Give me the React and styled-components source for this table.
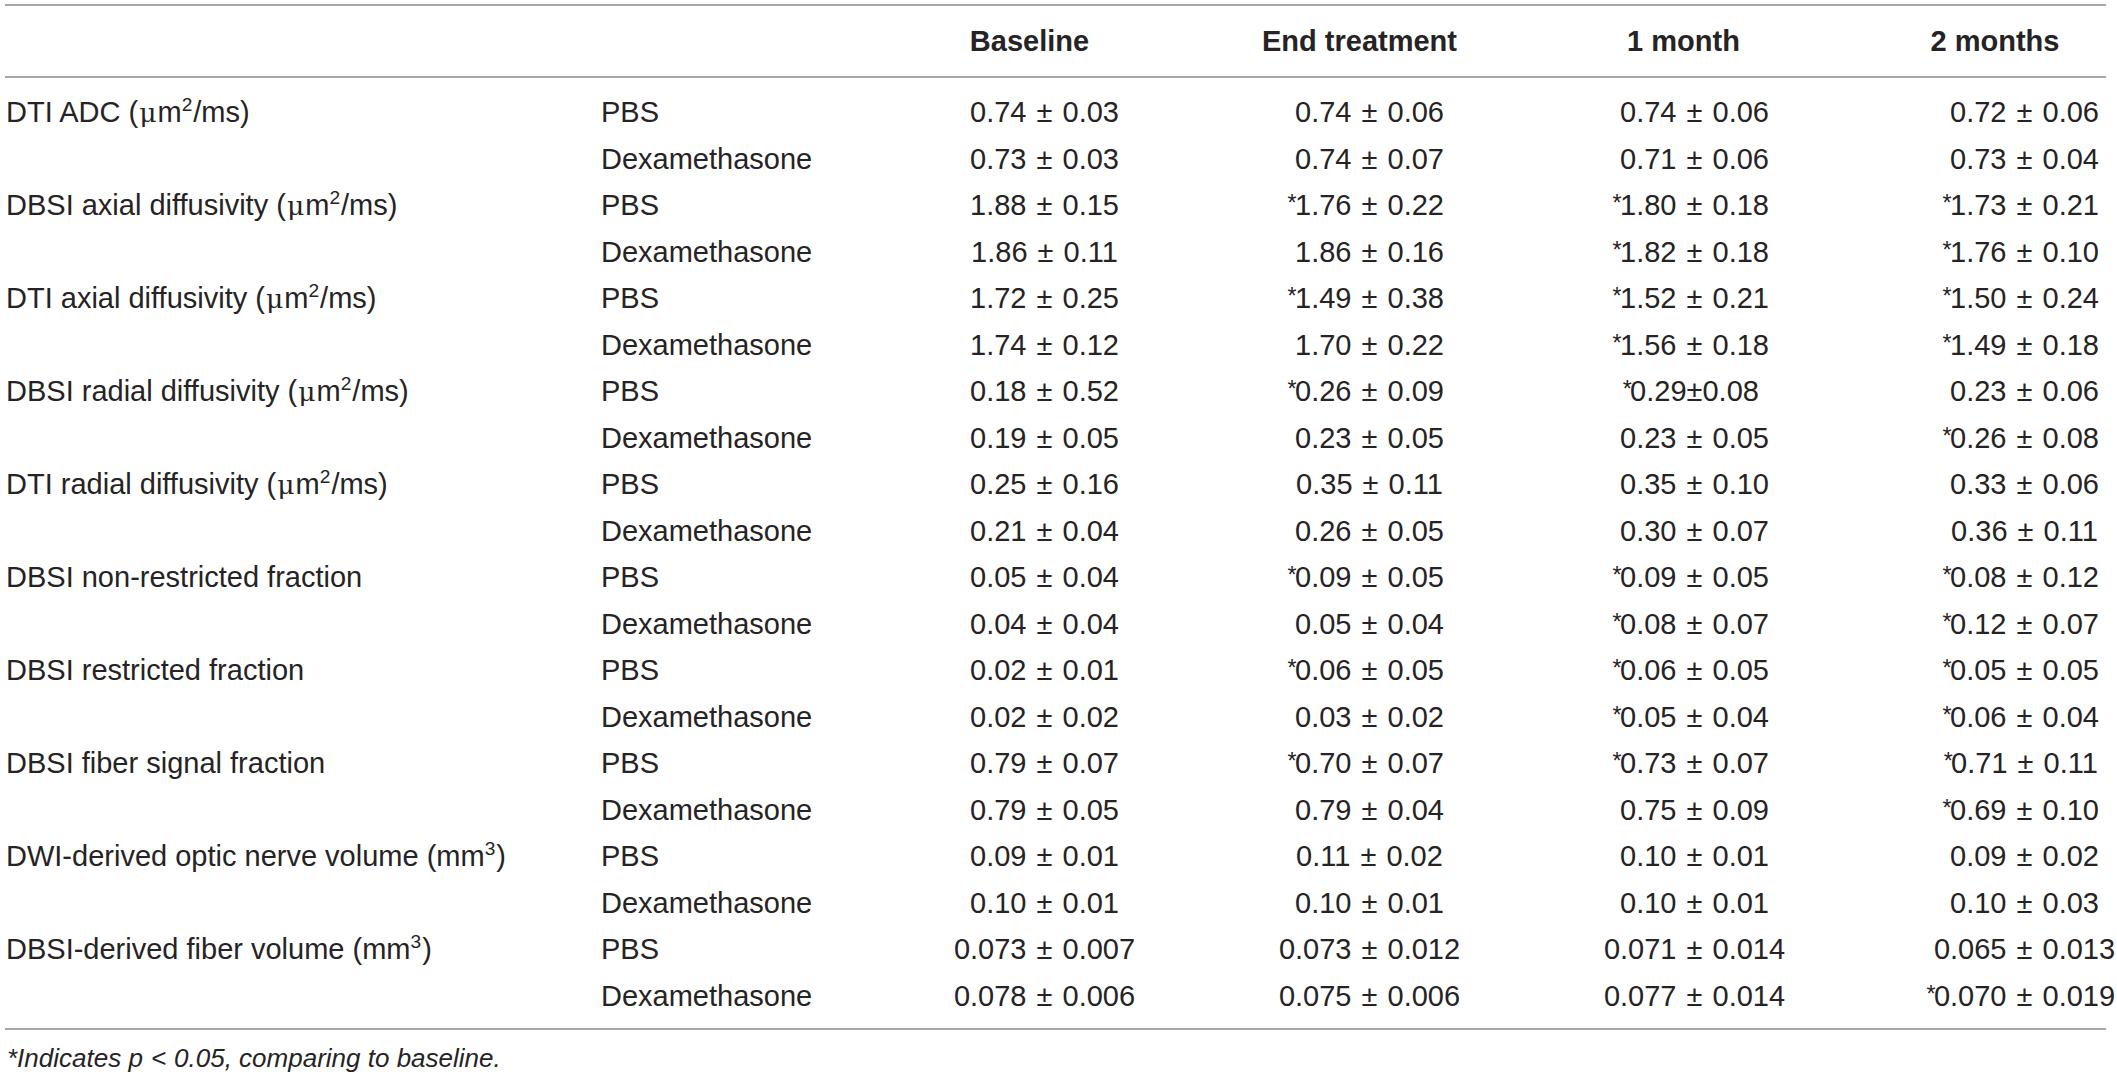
import styled, { createGlobalStyle } from "styled-components";

/* ---------------- GLOBAL ---------------- */

const GlobalStyle = createGlobalStyle`
  html, body {
    margin: 0;
    padding: 0;
    background: #ffffff;
  }
  body {
    font-family: "Liberation Sans", Arial, sans-serif;
    color: #262324;
    overflow: hidden;
  }
`;

/* ---------------- PAGE + TABLE FRAME ---------------- */

const Page = styled.div`
  padding: 4px 11px 0 5px;
`;

const Table = styled.div`
  width: 2101px;
  border-top: 2px solid #a7a7a7;
`;

const Row = styled.div`
  display: grid;
  grid-template-columns: 596px 281px 325px 325px 325px 260px;
  align-items: center;
  height: ${(p) => p.$height || "46.5px"};
  font-size: 29px;
  line-height: 1;
  white-space: nowrap;
`;

const HeadRow = styled(Row)`
  border-bottom: 2px solid #a7a7a7;
`;

const Body = styled.div`
  padding: 11.5px 0 8.5px;
  border-bottom: 2px solid #a7a7a7;
`;

/* ---------------- CELLS ---------------- */

const LabelCell = styled.div`
  padding-left: 1px;
`;

const GroupCell = styled.div``;

const HeadCell = styled.div`
  font-weight: 700;
  text-align: center;
  padding-right: ${(p) => p.$shift}px;
  &:last-child {
    padding-left: 64px;
  }
`;

const ValueCell = styled.div`
  text-align: center;
  &:last-child {
    padding-left: 64px;
    margin-right: -11px;
  }
`;

const Star = styled.span`
  display: inline-block;
  width: 0;
  margin-left: -0.32em;
  padding-right: 0.32em;
  font-size: 0.8em;
  vertical-align: 0.18em;
`;

const Pm = styled.span`
  margin: 0 ${(p) => (p.$tight ? 0 : 2)}px;
`;

const Sup = styled.sup`
  font-size: 0.66em;
  line-height: 0;
  vertical-align: 0.6em;
  margin-right: 1px;
`;

const Mu = styled.span`
  font-family: "DejaVu Serif", "Liberation Serif", serif;
  font-size: 0.92em;
  margin: 0 1px;
`;

const Footnote = styled.p`
  margin: 12px 0 0 2px;
  font-size: 26px;
  line-height: 32px;
  font-style: italic;
`;

const Lt = styled.span`
  margin: 0 8px;
`;

/* ---------------- DATA ---------------- */

const unit = (
  <>
    {" ("}
    <Mu>μ</Mu>m<Sup>2</Sup>/ms)
  </>
);

const mm3 = (
  <>
    {" (mm"}
    <Sup>3</Sup>)
  </>
);

const measures = [
  {
    label: <>DTI ADC{unit}</>,
    pbs: ["0.74 ± 0.03", "0.74 ± 0.06", "0.74 ± 0.06", "0.72 ± 0.06"],
    dex: ["0.73 ± 0.03", "0.74 ± 0.07", "0.71 ± 0.06", "0.73 ± 0.04"],
  },
  {
    label: <>DBSI axial diffusivity{unit}</>,
    pbs: ["1.88 ± 0.15", "*1.76 ± 0.22", "*1.80 ± 0.18", "*1.73 ± 0.21"],
    dex: ["1.86 ± 0.11", "1.86 ± 0.16", "*1.82 ± 0.18", "*1.76 ± 0.10"],
  },
  {
    label: <>DTI axial diffusivity{unit}</>,
    pbs: ["1.72 ± 0.25", "*1.49 ± 0.38", "*1.52 ± 0.21", "*1.50 ± 0.24"],
    dex: ["1.74 ± 0.12", "1.70 ± 0.22", "*1.56 ± 0.18", "*1.49 ± 0.18"],
  },
  {
    label: <>DBSI radial diffusivity{unit}</>,
    pbs: ["0.18 ± 0.52", "*0.26 ± 0.09", "*0.29±0.08", "0.23 ± 0.06"],
    dex: ["0.19 ± 0.05", "0.23 ± 0.05", "0.23 ± 0.05", "*0.26 ± 0.08"],
  },
  {
    label: <>DTI radial diffusivity{unit}</>,
    pbs: ["0.25 ± 0.16", "0.35 ± 0.11", "0.35 ± 0.10", "0.33 ± 0.06"],
    dex: ["0.21 ± 0.04", "0.26 ± 0.05", "0.30 ± 0.07", "0.36 ± 0.11"],
  },
  {
    label: "DBSI non-restricted fraction",
    pbs: ["0.05 ± 0.04", "*0.09 ± 0.05", "*0.09 ± 0.05", "*0.08 ± 0.12"],
    dex: ["0.04 ± 0.04", "0.05 ± 0.04", "*0.08 ± 0.07", "*0.12 ± 0.07"],
  },
  {
    label: "DBSI restricted fraction",
    pbs: ["0.02 ± 0.01", "*0.06 ± 0.05", "*0.06 ± 0.05", "*0.05 ± 0.05"],
    dex: ["0.02 ± 0.02", "0.03 ± 0.02", "*0.05 ± 0.04", "*0.06 ± 0.04"],
  },
  {
    label: "DBSI fiber signal fraction",
    pbs: ["0.79 ± 0.07", "*0.70 ± 0.07", "*0.73 ± 0.07", "*0.71 ± 0.11"],
    dex: ["0.79 ± 0.05", "0.79 ± 0.04", "0.75 ± 0.09", "*0.69 ± 0.10"],
  },
  {
    label: <>DWI-derived optic nerve volume{mm3}</>,
    pbs: ["0.09 ± 0.01", "0.11 ± 0.02", "0.10 ± 0.01", "0.09 ± 0.02"],
    dex: ["0.10 ± 0.01", "0.10 ± 0.01", "0.10 ± 0.01", "0.10 ± 0.03"],
  },
  {
    label: <>DBSI-derived fiber volume{mm3}</>,
    pbs: ["0.073 ± 0.007", "0.073 ± 0.012", "0.071 ± 0.014", "0.065 ± 0.013"],
    dex: ["0.078 ± 0.006", "0.075 ± 0.006", "0.077 ± 0.014", "*0.070 ± 0.019"],
  },
];

const headers = [
  { text: "Baseline", shift: 30 },
  { text: "End treatment", shift: 20 },
  { text: "1 month", shift: 22 },
  { text: "2 months", shift: 48 },
];

/* ---------------- PIECES ---------------- */

function Value({ text }) {
  const starred = text.startsWith("*");
  const body = starred ? text.slice(1) : text;
  const tight = !body.includes(" ± ");
  const [mean, sd] = body.split(tight ? "±" : " ± ");
  return (
    <ValueCell>
      {starred && <Star>*</Star>}
      {mean}
      <Pm $tight={tight}>{tight ? "±" : " ± "}</Pm>
      {sd}
    </ValueCell>
  );
}

function DataRow({ label, group, values }) {
  return (
    <Row>
      <LabelCell>{label}</LabelCell>
      <GroupCell>{group}</GroupCell>
      {values.map((v, i) => (
        <Value key={i} text={v} />
      ))}
    </Row>
  );
}

/* ---------------- COMPONENT ---------------- */

export default function App() {
  return (
    <Page>
      <GlobalStyle />
      <Table>
        <HeadRow $height="70px">
          <LabelCell />
          <GroupCell />
          {headers.map((h) => (
            <HeadCell key={h.text} $shift={h.shift}>
              {h.text}
            </HeadCell>
          ))}
        </HeadRow>

        <Body>
          {measures.map((m, i) => (
            <div key={i}>
              <DataRow label={m.label} group="PBS" values={m.pbs} />
              <DataRow label="" group="Dexamethasone" values={m.dex} />
            </div>
          ))}
        </Body>
      </Table>

      <Footnote>
        *Indicates p<Lt>&lt;</Lt>0.05, comparing to baseline.
      </Footnote>
    </Page>
  );
}
